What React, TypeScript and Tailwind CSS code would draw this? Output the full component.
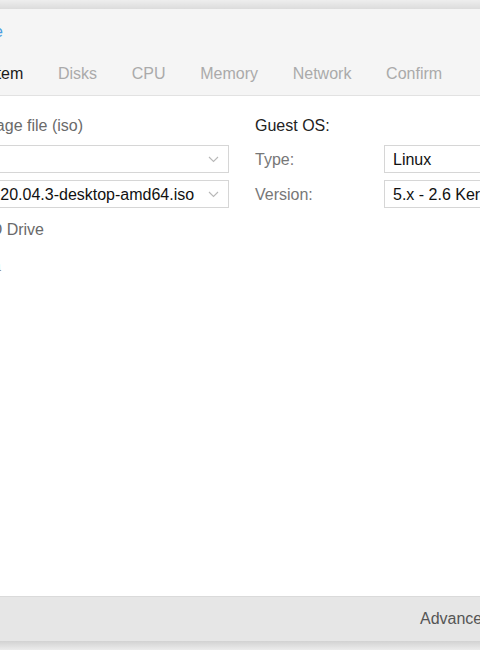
import React from "react";

function Chevron() {
  return (
    <svg width="11" height="7" viewBox="0 0 11 7" className="shrink-0">
      <path d="M1 1 L5.5 5.5 L10 1" fill="none" stroke="#b8b8b8" strokeWidth="1.1" />
    </svg>
  );
}

function Combo({ text, chevron, className }: { text: string; chevron?: boolean; className: string }) {
  return (
    <div className={`h-[28px] border border-[#d6d6d6] bg-white flex items-center pl-[8px] pr-[9px] shrink-0 ${className}`}>
      <span className="flex-1 whitespace-nowrap overflow-hidden text-[#111111] leading-[20px] pt-[2px]">{text}</span>
      {chevron && <Chevron />}
    </div>
  );
}

export default function App() {
  const tabs = ["System", "Disks", "CPU", "Memory", "Network", "Confirm"];
  return (
    <div
      className="w-[480px] h-[650px] overflow-hidden flex flex-col bg-white text-[16px]"
      style={{ fontFamily: '"Liberation Sans", Arial, sans-serif' }}
    >
      <div className="h-[9px] shrink-0 bg-gradient-to-b from-[#eeeeee] to-[#dcdcdc]" />
      <div className="h-[87px] shrink-0 bg-[#f5f5f5] border-b border-[#e2e2e2] flex flex-col">
        <div className="mt-[13px] h-[20px] w-[3px] flex justify-end whitespace-nowrap leading-[20px] text-[#4a9de0]">
          Create: Virtual Machine
        </div>
        <div className="mt-[22px] h-[20px] flex leading-[20px] ml-[-47.4px] whitespace-nowrap">
          {tabs.map((t, i) => (
            <div key={t} className={`px-[17.35px] ${i === 0 ? "text-[#1a1a1a]" : "text-[#aaaaaa]"}`}>
              {t}
            </div>
          ))}
        </div>
      </div>
      <div className="flex-1 flex pt-[20px] overflow-hidden">
        <div className="w-[229px] shrink-0 flex flex-col">
          <div className="w-[83px] h-[20px] flex justify-end whitespace-nowrap leading-[20px] text-[#6a6a6a]">
            Use CD/DVD disc image file (iso)
          </div>
          <Combo text="" chevron className="mt-[9px] ml-[-63px] w-[292px]" />
          <Combo text="ubuntu-20.04.3-desktop-amd64.iso" chevron className="mt-[7px] ml-[-63px] w-[292px]" />
          <div className="mt-[12px] w-[44px] h-[20px] flex justify-end whitespace-nowrap leading-[20px] text-[#6a6a6a]">
            Use physical CD/DVD Drive
          </div>
          <div className="mt-[16px] w-[1px] h-[20px] flex justify-end whitespace-nowrap leading-[20px] text-[#8a8a8a]">
            Do not use any media
          </div>
        </div>
        <div className="ml-[26px] shrink-0 flex flex-col">
          <div className="h-[20px] leading-[20px] text-[#222222] whitespace-nowrap">Guest OS:</div>
          <div className="mt-[9px] flex items-center">
            <div className="w-[129px] text-[#777777] leading-[20px] pt-[2px]">Type:</div>
            <Combo text="Linux" chevron className="w-[220px]" />
          </div>
          <div className="mt-[7px] flex items-center">
            <div className="w-[129px] text-[#777777] leading-[20px] pt-[2px]">Version:</div>
            <Combo text="5.x - 2.6 Kernel" chevron className="w-[220px]" />
          </div>
        </div>
      </div>
      <div className="h-[45px] shrink-0 bg-[#e6e6e6] border-t border-[#dadada] flex items-center">
        <span className="ml-[420px] whitespace-nowrap leading-[20px] text-[#555555]">Advanced</span>
      </div>
      <div className="h-[9px] shrink-0 bg-gradient-to-b from-[#d2d2d2] to-[#ececec]" />
    </div>
  );
}
